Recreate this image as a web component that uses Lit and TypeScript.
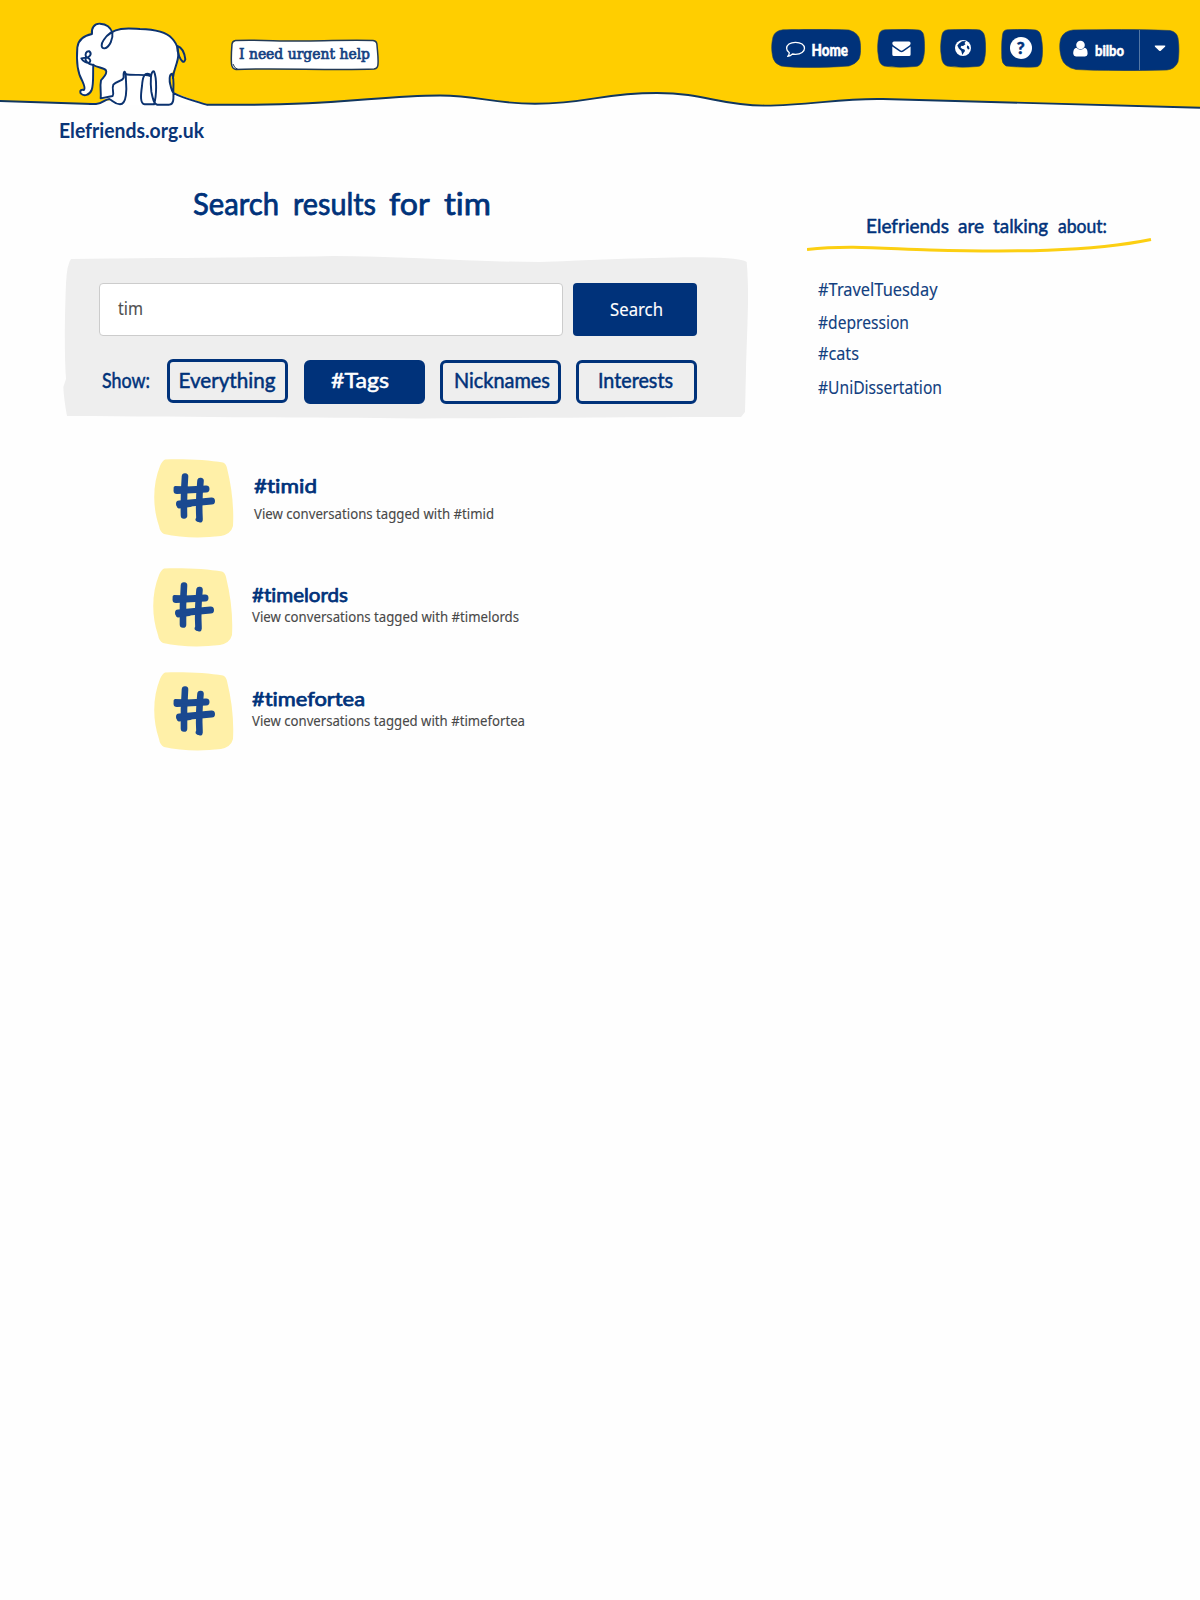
import { LitElement, html, svg, css } from "lit";
import { customElement, property } from "lit/decorators.js";

/** [text, x offset, width] */
type Word = [string, number, number];

/** One line of lettering whose box ends on the baseline. */
@customElement("fit-line")
class FitLine extends LitElement {
  @property({ attribute: false }) words: Word[] = [];
  @property({ type: Number }) size = 18;
  @property({ type: Number }) rise = 20;

  static styles = css`
    :host { display: block; }
    svg { display: block; overflow: visible; }
    text { fill: currentColor; stroke: currentColor; stroke-width: var(--heft, 0); stroke-linejoin: round; font-variant-ligatures: none; }
  `;

  render() {
    const last = this.words[this.words.length - 1];
    return html`<svg width=${last[1] + last[2]} height=${this.rise}>
      <text y=${this.rise} font-size=${this.size}>${this.words.map(
        ([t, x, w]) => svg`<tspan x=${x} textLength=${w} lengthAdjust="spacingAndGlyphs">${t}</tspan> `
      )}</text>
    </svg>`;
  }
}

const line = (words: Word[], size: number, rise: number, cls = "hand") =>
  html`<fit-line class=${cls} .words=${words} .size=${size} .rise=${rise}></fit-line>`;

@customElement("site-logo")
class SiteLogo extends LitElement {
  static styles = css`
    :host { display: block; width: 145px; }
    svg { display: block; overflow: visible; }
    .body { fill: #fff; }
    .ink { fill: none; stroke: #0b326f; stroke-width: 5.8; stroke-linecap: round; stroke-linejoin: round; }
    .hand { font-family: Lato, "Open Sans", sans-serif; font-weight: 700; color: #0a3578; }
  `;
  render() {
    return html`
      <svg width="145" height="116" viewBox="59 0 145 116">
        <g transform="translate(50 10) scale(.33333)">
          <path class="body" d="M126 72C120 50 135 40 150 41C168 42 182 55 187 68C205 54 240 54 270 56C310 58 348 65 366 85C388 108 388 135 380 160C374 180 362 190 359 210C360 228 364 240 370 249L470 286L190 286L176 267L152 265C154 245 149 230 153 211C160 202 173 192 168 181C160 174 142 172 130 164C128 190 132 220 125 240C118 256 102 260 92 250C88 240 96 238 102 240C107 234 102 224 97 213C83 190 79 150 82 112C85 88 100 77 126 72Z" />
          <path class="ink" d="M187 68C182 52 168 42 150 41C133 40 123 55 126 72C100 77 85 88 82 112C79 150 83 190 97 213C102 224 107 234 102 240C96 238 88 240 92 250C102 260 118 256 125 240C132 220 128 190 130 164" />
          <path class="ink" d="M187 68C190 85 179 112 164 115C151 116 154 100 161 90C172 73 187 61 213 57C232 54 250 56 270 57C310 58 348 65 366 85C388 108 388 135 380 160C376 175 370 185 369 204" />
          <path class="ink" d="M382 108C397 113 404 132 406 148C402 163 393 152 388 140C383 129 381 118 382 108Z" />
          <path class="ink" d="M109 142C103 132 109 123 118 124C127 132 119 143 107 143L94 145C99 155 111 160 118 158C126 151 116 141 106 143C105 154 115 163 130 165C143 173 162 173 168 181C173 192 160 202 153 211C149 230 154 245 152 265L188 258C194 250 184 238 190 224C201 211 216 216 221 203C221 195 219 187 224 185C229 190 227 200 228 213C230 235 231 283 210 283C194 283 188 272 178 267C164 268 158 281 138 282L120 282" />
          <path class="ink" d="M226 192C250 198 276 191 301 198M301 194C284 185 278 198 276 228C272 256 270 282 284 283L312 283C320 258 321 204 312 184C301 182 301 217 304 245C308 266 312 283 322 284L358 284C374 282 370 260 370 240C371 218 372 202 366 191C357 192 358 214 361 224C363 234 366 245 371 249C395 264 430 271 470 284" />
        </g>
      </svg>
      ${line([["Elefriends.org.uk", 0, 145]], 20, 22)}
    `;
  }
}

@customElement("hash-badge")
class HashBadge extends LitElement {
  static styles = css`
    :host { display: block; width: 80px; height: 79px; }
    svg { display: block; }
    .tile { fill: #fff0a8; }
    .mark { fill: none; stroke: #1a4990; stroke-linecap: round; stroke-linejoin: round; }
  `;
  render() {
    return html`<svg width="80" height="79" viewBox="0 0 80 79">
      <path class="tile" d="M11 .5C30-.3 55 1 69 3.500Q72 4.500 73 9C78 29 80 49 79 67Q77 75 67 77C46 79.500 26 78.500 10 75Q6 73 5 67C-2 47-1 24 6 7Q8 2 11 .5Z" />
      <path class="mark" stroke-width="6.600" d="M31 17.500Q29.500 37 30 56.500M46.500 22Q44.500 42 45.500 59.500" />
      <path class="mark" stroke-width="7" d="M23 31.500L52 30M25.500 45L57.500 42" />
      <path class="mark" stroke-width="4" d="M21.500 29L33 29.500M25 47.500L36 46M43.500 60.500L46.500 61.500" />
    </svg>`;
  }
}

const icons = {
  home: svg`<path fill="none" stroke="#fff" stroke-width="1.300" stroke-linejoin="round" d="M24.500 13.300C30 13.300 33.500 16 33.500 19.300S30 25.300 24.500 25.300Q23 25.300 21.500 25C20 26.500 18.500 27.200 16.700 27.400Q18.300 25.800 18.300 23.700C16.500 22.500 15.600 21 15.600 19.300C15.600 16 19 13.300 24.500 13.300Z"/>`,
  mail: svg`<path fill="#fff" d="M15.300 14.200Q15.300 12.500 17 12.500H32Q33.600 12.500 33.600 14.200Q33.600 15.500 32.500 16.500L26 21Q24.500 22.300 23 21L16.500 16.500Q15.300 15.500 15.300 14.200ZM15.300 17.500L22.500 22.600Q24.500 24 26.500 22.600L33.600 17.500V25.500Q33.600 27 32 27H17Q15.300 27 15.300 25.500Z"/>`,
  globe: svg`<circle cx="23" cy="19" r="8" fill="#fff"/><path fill="#00327a" d="M22 12.300L26 12L24.500 14L25.500 15.200L23 17L21.500 16.800L20.500 18.300L22 19.800L24.500 20.500L25 22L23.500 24L22.300 26L21.300 22L18.800 19.500L17.300 16.500L19 14.500ZM27.200 16.200L29 17.500L29.500 20L28 20.500L26.800 18.500Z"/>`,
  user: svg`<circle cx="21.500" cy="16" r="4.300" fill="#fff"/><path fill="#fff" d="M17.500 18.800Q21.500 22.500 25.500 18.800C28 19 28.700 22 28.600 25Q28.400 27.400 26 27.400H17Q14.500 27.400 14.300 25C14.200 22 15 19 17.500 18.800Z"/>`,
};

@customElement("site-nav")
class SiteNav extends LitElement {
  static styles = css`
    :host { display: flex; align-items: flex-start; }
    .home { margin-right: 16px; }
    .mail, .globe { margin-right: 15px; }
    .help { margin-right: 16px; }
    svg { display: block; }
    .plate { fill: #00327a; stroke: #29415a; stroke-width: .6; }
    text { font-family: Lato, "Open Sans", sans-serif; font-weight: 900; fill: #fff; stroke: #fff; stroke-width: .5; }
    .query { fill: #00327a; stroke: #00327a; }
  `;
  render() {
    return html`
      <svg class="home" width="90" height="39" viewBox="0 0 90 39">
        <path class="plate" d="M12 .8C30 .2 60-.2 78 1Q88 4 89 12C90 18 90 25 88 30Q85 35 78 37C50 39 25 39 10 37Q3 34 2 29C0 20 .5 15 2 8Q4 1.500 12 .8Z" />
        ${icons.home}
        <text x="40.500" y="26.500" font-size="16.500" textLength="36.500" lengthAdjust="spacingAndGlyphs">Home</text>
      </svg>
      <svg class="mail" width="48" height="39" viewBox="0 0 48 39">
        <path class="plate" d="M8 .8C20 .2 32 0 42 1Q46.500 2 47 8C48 17 48 25 45.500 32Q43 37.500 38 37.500C27 38.500 16 38.500 7 37Q2 35 1.500 28C0 20 .6 13 2 6Q3 1 8 .8Z" />${icons.mail}
      </svg>
      <svg class="globe" width="46" height="39" viewBox="0 0 46 39">
        <path class="plate" d="M8 .8C18 .3 30 0 40 1Q44.500 3 45 9C46 17 46 25 44 32Q42 37.500 37 37.500C26 38.500 16 38.500 7 37Q2 35 1.500 28C0 20 .6 13 2 6Q3 1 8 .8Z" />${icons.globe}
      </svg>
      <svg class="help" width="42" height="39" viewBox="0 0 42 39">
        <path class="plate" d="M6 .8C16 .2 27 0 35 1Q39 2 40 7C42 17 42 25 40.500 32Q39 38 34 38C24 38.500 14 38 5 37Q1 35 .8 29C.5 20 .5 13 1.500 6Q2 1 6 .8Z" />
        <circle cx="20" cy="19" r="11" fill="#fff" />
        <text class="query" x="15.800" y="25" font-size="17">?</text>
      </svg>
      <svg class="user" width="121" height="42" viewBox="0 0 121 42">
        <path class="plate" d="M14 1C45 .5 80 0 111 1.500Q118 3 119 9C120.500 18 120 27 119 33Q116 40 108 41C75 42 45 42 17 40.500Q5 38 2.500 29C.5 22 0 15 2 9Q5 2 14 1Z" />
        <path d="M80.500 1V41" stroke="#5377a5" stroke-width="1" />
        ${icons.user}
        <text x="36" y="26.500" font-size="15.500" textLength="29" lengthAdjust="spacingAndGlyphs">bilbo</text>
        <path fill="#fff" d="M96.500 16.500H105.500Q107 16.500 106 17.800L101.800 21.700Q101 22.300 100.200 21.700L96 17.800Q95 16.500 96.500 16.500Z" />
      </svg>
    `;
  }
}

const filters: { label: string; w: number; on?: boolean; cls: string; pad: number }[] = [
  { label: "Everything", w: 97, cls: "raised", pad: 8.500 },
  { label: "#Tags", w: 58, on: true, cls: "", pad: 24 },
  { label: "Nicknames", w: 96, cls: "", pad: 11 },
  { label: "Interests", w: 75, cls: "", pad: 19 },
];

const results = [
  { tag: "#timid", w: 63, sub: 240, cls: "first" },
  { tag: "#timelords", w: 96, sub: 267, cls: "second" },
  { tag: "#timefortea", w: 113, sub: 273, cls: "third" },
];

const trends: [string, number, number][] = [
  ["#TravelTuesday", 119.500, 34],
  ["#depression", 91, 33],
  ["#cats", 41, 31],
  ["#UniDissertation", 124, 34],
];

@customElement("app-root")
class AppRoot extends LitElement {
  static styles = css`
    :host { display: block; width: 1200px; height: 1600px; background: #fefefe; overflow: hidden; color: #00327a; }
    * { box-sizing: border-box; }
    .hand { font-family: Lato, "Open Sans", sans-serif; font-weight: 400; --heft: .5px; }
    .bold { --heft: .75px; }
    .plain { font-family: "Noto Sans", "Open Sans", sans-serif; --heft: .12px; }
    .top { position: relative; display: flex; align-items: flex-start; height: 160px; padding-left: 59px; }
    .wave { position: absolute; left: 0; top: 0; display: block; }
    .top > :not(.wave) { position: relative; }
    .urgent { margin: 39px 0 0 26px; display: block; }
    .urgent text { font-family: "DejaVu Serif", serif; fill: #123f80; stroke: #123f80; stroke-width: .7; }
    site-nav { margin: 29px 0 0 392px; }
    .page { display: grid; grid-template-columns: 807px 1fr; }
    .title { margin: 25px 0 0 193px; }
    .panel { position: relative; width: 686px; height: 164px; margin: 40px 0 0 63px; padding: 28px 0 0 36px; }
    .sheet { position: absolute; left: 0; top: 0; }
    .row { position: relative; display: flex; }
    .box { width: 464px; height: 53px; border: 1px solid #ccc; border-radius: 4px; background: #fff; color: #505050; padding: 0 0 0 18px; margin-right: 10px; }
    .go { width: 124px; height: 53px; border: 0; border-radius: 4px; background: #00327a; color: #fff; padding: 0 0 0 37px; }
    .filters { align-items: flex-start; margin-top: 24px; }
    .show { width: 68px; padding-left: 3px; }
    .chip { width: 121px; height: 44px; border: 3px solid #00327a; border-radius: 6px; margin-right: 15px; background: transparent; color: #00327a; display: block; }
    .chip.raised { margin-top: -1px; margin-right: 16px; }
    .chip.raised fit-line { padding-top: 1px; }
    .chip.on { background: #00327a; color: #fff; }
    .result { display: flex; align-items: flex-start; }
    .result hash-badge { margin-right: 20px; }
    .first { margin: 40px 0 0 153.500px; }
    .second { margin: 30px 0 0 152.500px; }
    .third { margin: 25px 0 0 153.500px; }
    .second hash-badge { margin-right: 19.500px; }
    .third hash-badge { margin-right: 18.500px; }
    .copy { padding-top: 10px; }
    .note { color: #484848; }
    .side-title { margin: 48px 0 0 59px; }
    .rule { display: block; margin: 5px 0 0; }
    .trends { margin: 4px 0 0 11px; color: #123f80; }
  `;

  render() {
    return html`
      <header class="top">
        <svg class="wave" width="1200" height="120" viewBox="0 0 1200 120">
          <path fill="#ffce00" d="M0 0H1200V107.700L883 99C840 98 810 105.600 765 105.600C720 105.600 705 93 657 93C600 93 590 103.700 535 103.700C490 103.700 480 95.500 440 95.500C380 95.500 345 104.700 270 104.700H207L174 93L104 101Q100 104 92 104L0 101Z" />
          <path fill="none" stroke="#10365f" stroke-width="1.900" d="M0 101L92 104M207 104.700H250C345 104.700 380 95.500 440 95.500C480 95.500 490 103.700 535 103.700C590 103.700 600 93 657 93C705 93 720 105.600 765 105.600C810 105.600 840 98 883 99L1200 107.700" />
        </svg>
        <site-logo></site-logo>
        <svg class="urgent" width="149" height="33" viewBox="0 0 149 33">
          <path fill="#fff" stroke="#233a55" stroke-width="1.500" stroke-linejoin="round" d="M5.500 1.500C30 .5 50 2.500 75 2C100 2 120 .5 143 1.500Q147 2 147 6C147.500 13 148.500 19 148 25Q148 29.500 144 30C110 31.500 40 29 6 30.500Q2 30 1.500 25C1 18 1.500 11 2 5Q2.500 2 5.500 1.500Z" />
          <path fill="none" stroke="#233a55" stroke-width="1" d="M3 25Q4 29 8 30.500" />
          <text x="9" y="20.300" font-size="15" textLength="131" lengthAdjust="spacingAndGlyphs">I need urgent help</text>
        </svg>
        <site-nav></site-nav>
      </header>
      <div class="page">
        <main>
          <div class="title">${line([["Search", 0, 86], ["results", 100, 83], ["for", 196, 40], ["tim", 251, 47]], 30, 30, "hand bold")}</div>
          <section class="panel">
            <svg class="sheet" width="686" height="164" viewBox="63 255 686 164">
              <path fill="#eee" d="M71 259C150 258 250 258 333 256C400 256 470 262 540 262C600 260 650 257.300 703 257.300Q742 258 746.700 262C749 290 748 310 746 370L745 412L741 417C640 417 540 418 420 418.500C300 417.500 200 417 67 416Q64 400 63.300 387L66 379C64 350 65 310 66 283Q67 264 71 259Z" />
            </svg>
            <div class="row">
              <div class="box">${line([["tim", 0, 25]], 18, 31, "plain")}</div>
              <div class="go">${line([["Search", 0, 53]], 18, 33, "plain")}</div>
            </div>
            <div class="row filters">
              <div class="show">${line([["Show:", 0, 48]], 21, 28)}</div>
              ${filters.map(
                (f) => html`<div class="chip ${f.cls} ${f.on ? "on" : ""}">${line([[f.label, f.pad, f.w]], 20.5, 25)}</div>`
              )}
            </div>
          </section>
          ${results.map(
            (r) => html`<article class="result ${r.cls}">
              <hash-badge></hash-badge>
              <div class="copy">
                ${line([[r.tag, 0, r.w]], 20, 24, "hand bold")}
                ${line([["View conversations tagged with " + r.tag, 0, r.sub]], 14, r.cls === "first" ? 26 : 20, "plain note")}
              </div>
            </article>`
          )}
        </main>
        <aside>
          <div class="side-title">${line([["Elefriends", 0, 83], ["are", 92, 26], ["talking", 127, 55], ["about:", 192, 49]], 19.5, 25)}</div>
          <svg class="rule" width="345" height="20" viewBox="807 238 345 20">
            <path fill="none" stroke="#fccf12" stroke-width="3" d="M807 249.500C850 244.500 890 249 930 250C1010 252 1090 252 1151 239.500" />
          </svg>
          <nav class="trends">${trends.map(([t, w, rise]) => line([[t, 0, w]], 17.8, rise, "plain"))}</nav>
        </aside>
      </div>
    `;
  }
}
